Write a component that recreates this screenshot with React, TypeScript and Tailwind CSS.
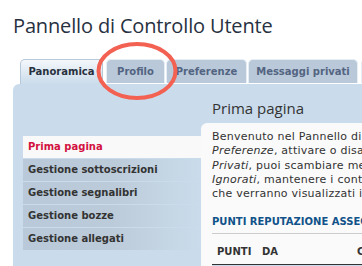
import React from "react";

const menu = [
  "Prima pagina",
  "Gestione sottoscrizioni",
  "Gestione segnalibri",
  "Gestione bozze",
  "Gestione allegati",
];

function Tab({ label, w }: { label: string; w: string }) {
  return (
    <div
      className={`${w} h-[24px] shrink-0 flex items-center justify-center rounded-t-[5px] border border-b-0 border-[#e6eef5] bg-[#b9c9d9] text-[10px] font-bold text-[#536482]`}
    >
      {label}
    </div>
  );
}

export default function App() {
  return (
    <div
      className="relative w-[362px] h-[266px] overflow-hidden bg-white"
      style={{ fontFamily: '"DejaVu Sans", Verdana, sans-serif' }}
    >
      <h2
        className="pl-[13px] pt-[14px] text-[20px] leading-[24px] text-[#28313f] whitespace-nowrap tracking-[-0.15px]"
        style={{ fontFamily: '"Open Sans", sans-serif' }}
      >
        Pannello di Controllo Utente
      </h2>

      {/* tabs */}
      <div className="mt-[21px] ml-[20px] flex items-end h-[25px] whitespace-nowrap">
        <div className="w-[83px] h-[25px] shrink-0 flex items-center justify-center pb-[1px] rounded-t-[5px] border border-b-0 border-[#b7c8d8] bg-gradient-to-b from-[#f4f8fb] to-[#cadceb] text-[10px] font-bold text-[#28313f]">
          Panoramica
        </div>
        <div className="w-[3px] shrink-0 h-[1px] bg-white" />
        <div className="border-b border-white flex items-end gap-[1px]">
          <Tab label="Profilo" w="w-[59px]" />
          <Tab label="Preferenze" w="w-[81px]" />
          <Tab label="Messaggi privati" w="w-[110px]" />
          <div className="w-[1px]" />
          <Tab label="Amici e ignorati" w="w-[110px]" />
        </div>
      </div>

      {/* panel */}
      <div className="ml-[13px] w-[420px] h-[200px] bg-[#cadceb] rounded-tl-[6px] flex">
        <div className="w-[188px] pl-[10px] pt-[52px] shrink-0">
          {menu.map((m, i) =>
            i === 0 ? (
              <div
                key={m}
                className="h-[22px] leading-[22px] pl-[5px] bg-[#f9f9f9] text-[#d31141] text-[10px] font-bold mb-[1px] whitespace-nowrap"
              >
                {m}
              </div>
            ) : (
              <div
                key={m}
                className="h-[22px] leading-[22px] pl-[5px] bg-gradient-to-r from-[#b9c9d9] via-[#bccbda] to-[#cadceb] text-[#333333] text-[10px] font-bold mb-[1px] whitespace-nowrap"
              >
                {m}
              </div>
            )
          )}
        </div>
        <div className="flex-1">
          <h3
            className="pl-[11px] pt-[15px] text-[15px] leading-[18px] text-[#333333] whitespace-nowrap"
            style={{ fontFamily: '"Open Sans", sans-serif' }}
          >
            Prima pagina
          </h3>
          <div className="mt-[6px] bg-[#fafafa] rounded-tl-[6px] h-[200px] pl-[11px] pt-[7px]">
            <p className="text-[11px] leading-[14.3px] text-[#333333] whitespace-nowrap tracking-[0.25px]">
              Benvenuto nel Pannello di Controllo Utente. Da qui puoi modificare le tue
              <br />
              <i>Preferenze</i>, attivare o disattivare le notifiche. Con i <i>Messaggi</i>
              <br />
              <i>Privati</i>, puoi scambiare messaggi con gli altri utenti. Con <i>Amici e</i>
              <br />
              <i>Ignorati</i>, mantenere i contatti con gli utenti
              <br />
              che verranno visualizzati in evidenza.
            </p>
            <div className="mt-[14px] pb-[4px] border-b border-[#cccccc] text-[10px] font-bold text-[#105289] whitespace-nowrap leading-[14px]">
              PUNTI REPUTAZIONE ASSEGNATI
            </div>
            <div className="mt-[12px] flex text-[10px] font-bold text-[#333333] pb-[6px] border-b border-[#333333] leading-[12px] whitespace-nowrap">
              <span className="w-[50px] pl-[5px] shrink-0">PUNTI</span>
              <span className="w-[95px] shrink-0">DA</span>
              <span>COMMENTO</span>
            </div>
            <div className="h-[20px] bg-[#cadceb]"></div>
          </div>
        </div>
      </div>

      {/* annotation circle */}
      <svg className="absolute left-0 top-0 pointer-events-none" width="362" height="266">
        <ellipse cx="137" cy="71" rx="38.5" ry="27" fill="none" stroke="#f26152" strokeWidth="4" />
      </svg>
    </div>
  );
}
